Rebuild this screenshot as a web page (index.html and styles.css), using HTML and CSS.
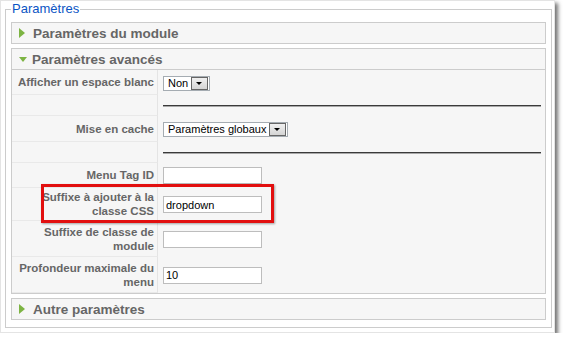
FILE: index.html
```html
<!DOCTYPE html>
<html lang="fr">
<head>
  <meta charset="UTF-8">
  <title>Paramètres</title>
  <link rel="stylesheet" href="styles.css">
</head>
<body>
  <div class="window">
    <fieldset class="params">
      <legend>Paramètres</legend>

      <div class="panel">
        <h3 class="panel-title"><span class="arrow right"></span>Paramètres du module</h3>
      </div>

      <div class="panel open">
        <h3 class="panel-title"><span class="arrow down"></span>Paramètres avancés</h3>
        <div class="panel-body">
          <table class="paramlist">
            <tr class="row-ctl">
              <td class="key">Afficher un espace blanc</td>
              <td class="value">
                <span class="select"><span class="select-text">Non</span><span class="select-btn"></span></span>
              </td>
            </tr>
            <tr class="row-hr">
              <td class="key"></td>
              <td class="value"><hr></td>
            </tr>
            <tr class="row-ctl tall">
              <td class="key">Mise en cache</td>
              <td class="value">
                <span class="select"><span class="select-text">Paramètres globaux</span><span class="select-btn"></span></span>
              </td>
            </tr>
            <tr class="row-hr">
              <td class="key"></td>
              <td class="value"><hr></td>
            </tr>
            <tr class="row-ctl">
              <td class="key">Menu Tag ID</td>
              <td class="value"><input type="text" class="field" value=""></td>
            </tr>
            <tr class="row-2l short">
              <td class="key">Suffixe à ajouter à la classe CSS</td>
              <td class="value"><input type="text" class="field" value="dropdown"></td>
            </tr>
            <tr class="row-2l">
              <td class="key">Suffixe de classe de module</td>
              <td class="value"><input type="text" class="field" value=""></td>
            </tr>
            <tr class="row-2l">
              <td class="key">Profondeur maximale du menu</td>
              <td class="value"><input type="text" class="field" value="10"></td>
            </tr>
          </table>
          <!-- highlight drawn over the CSS suffix row -->
          <div class="highlight"></div>
        </div>
      </div>

      <div class="panel">
        <h3 class="panel-title"><span class="arrow right"></span>Autre paramètres</h3>
      </div>
    </fieldset>
  </div>
</body>
</html>
```

FILE: styles.css
```css
body {
  margin: 0;
  background: #fff;
  font-family: Arial, "Liberation Sans", sans-serif;
}
.window {
  width: 555px;
  height: 333px;
  box-sizing: border-box;
  border: 1px solid #e4e4e4;
  padding: 0 0 0 4px;
  background: #fff;
  box-shadow: 3px 3px 4px rgba(0, 0, 0, 0.55);
}
.params {
  width: 547px;
  box-sizing: border-box;
  margin: 0;
  padding: 0 5px 7px 5px;
  border: 1px solid #ccc;
}
.params legend {
  padding: 0 1px;
  font-size: 13px;
  line-height: 16px;
  color: #0b55c4;
}
.panel {
  margin-top: 4px;
  border: 1px solid #ccc;
  background: #f6f6f6;
}
.panel:first-of-type {
  margin-top: 5px;
}
.panel-title {
  display: flex;
  align-items: center;
  margin: 0;
  height: 20px;
  padding-left: 7px;
  font-size: 13.5px;
  font-weight: bold;
  color: #666;
}
.open .panel-title {
  border-bottom: 1px solid #ccc;
}
.arrow {
  display: inline-block;
  width: 0;
  height: 0;
}
.arrow.right {
  border-left: 6px solid #7db443;
  border-top: 5px solid transparent;
  border-bottom: 5px solid transparent;
  margin-right: 8px;
}
.arrow.down {
  border-top: 5px solid #7db443;
  border-left: 4.5px solid transparent;
  border-right: 4.5px solid transparent;
  margin-right: 5px;
  margin-top: 1px;
}
.panel-body {
  position: relative;
}
.paramlist {
  width: 100%;
  border-collapse: separate;
  border-spacing: 0;
}
.paramlist td {
  box-sizing: border-box;
  vertical-align: middle;
  padding: 0;
}
.paramlist td.key {
  width: 146px;
  padding: 0 3px 0 2px;
  text-align: right;
  font-size: 11.5px;
  line-height: 14px;
  font-weight: bold;
  color: #666;
  background: #f6f6f6;
  border-bottom: 1px solid #e9e9e9;
  border-right: 1px solid #e4e4e4;
}
.paramlist td.value {
  padding: 0 4px 0 5px;
}
.row-ctl td {
  height: 25px;
}
.row-ctl.tall td {
  height: 26px;
}
.row-hr td {
  height: 21px;
}
.row-2l td {
  height: 36px;
}
.row-2l.short td {
  height: 33px;
}
.paramlist hr {
  margin: 0;
  height: 0;
  border: 0;
  border-top: 1px solid #3a3a3a;
  border-bottom: 1px solid #a8a8a8;
}
.select {
  display: inline-flex;
  align-items: center;
  box-sizing: border-box;
  height: 15px;
  padding-right: 1px;
  border: 1px solid #a5acb2;
  background: #fff;
  vertical-align: middle;
  white-space: nowrap;
}
.select-text {
  padding: 0 3px 0 4px;
  font-size: 11px;
  line-height: 13px;
  color: #000;
}
.select-btn {
  position: relative;
  box-sizing: border-box;
  width: 17px;
  height: 13px;
  border: 1px solid #666;
  background: linear-gradient(#f0f0f0, #d4d4d4);
}
.select-btn::after {
  content: "";
  position: absolute;
  left: 4px;
  top: 4px;
  border-top: 3px solid #000;
  border-left: 3.5px solid transparent;
  border-right: 3.5px solid transparent;
}
.field {
  display: block;
  box-sizing: border-box;
  width: 99px;
  height: 17px;
  margin: 0;
  padding: 0 2px;
  border: 1px solid #bdbdbd;
  background: #fff;
  font-family: Arial, "Liberation Sans", sans-serif;
  font-size: 11px;
  color: #000;
}
.highlight {
  position: absolute;
  left: 29px;
  top: 114px;
  width: 233px;
  height: 39px;
  box-sizing: border-box;
  border: 3px solid #e20f0f;
  box-shadow: 1px 1px 2px rgba(0, 0, 0, 0.35);
  pointer-events: none;
}
```
